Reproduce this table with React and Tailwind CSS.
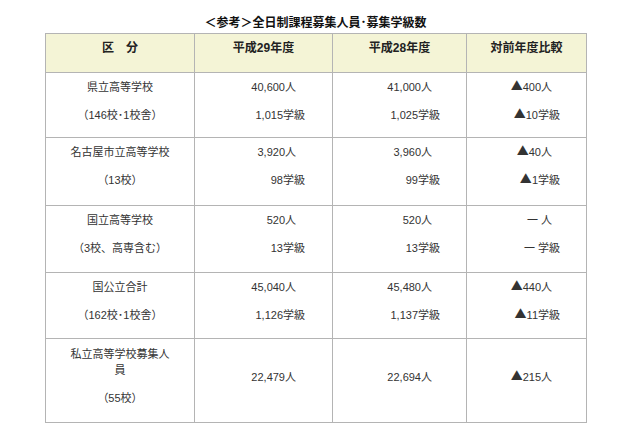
import React from "react";

const font = { fontFamily: '"Liberation Sans", "Noto Sans CJK JP", sans-serif' };
const cjk = { fontFamily: '"Noto Sans CJK JP", sans-serif' };

const rows = [
  {
    name: ["県立高等学校", "（146校･1校舎）"],
    h: "h-[65px]",
    v29: ["40,600人", "1,015学級"],
    v28: ["41,000人", "1,025学級"],
    diff: ["▲400人", "▲10学級"],
  },
  {
    name: ["名古屋市立高等学校", "（13校）"],
    h: "h-[68px]",
    v29: ["3,920人", "98学級"],
    v28: ["3,960人", "99学級"],
    diff: ["▲40人", "▲1学級"],
  },
  {
    name: ["国立高等学校", "（3校、高専含む）"],
    h: "h-[67px]",
    v29: ["520人", "13学級"],
    v28: ["520人", "13学級"],
    diff: ["一 人", "一 学級"],
  },
  {
    name: ["国公立合計", "（162校･1校舎）"],
    h: "h-[66px]",
    v29: ["45,040人", "1,126学級"],
    v28: ["45,480人", "1,137学級"],
    diff: ["▲440人", "▲11学級"],
  },
];

// the triangle is drawn full width in the original, so give it the CJK face
const Val = ({ text }) =>
  text.startsWith("▲") ? (
    <>
      <span style={cjk} className="text-[12px] leading-none">▲</span>
      {text.slice(1)}
    </>
  ) : (
    text
  );

// 人 lines sit a bit further left than 学級 lines in the original
const NumCell = ({ lines, pr1, pr2 }) => (
  <td className="border border-[#b4b4b4] align-top pt-[6px]">
    <div className="flex flex-col gap-[12px]">
      <div className={`text-right h-[16px] leading-[16px] ${pr1}`}>
        <Val text={lines[0]} />
      </div>
      <div className={`text-right h-[16px] leading-[16px] ${pr2}`}>
        <Val text={lines[1]} />
      </div>
    </div>
  </td>
);

export default function App() {
  return (
    <div className="w-[640px] h-[426px] bg-white text-[#333] overflow-hidden" style={font}>
      <div className="pt-[15px] pl-[45px]">
        <div className="w-[541px] text-center text-[12px] leading-[16px] font-bold text-[#111] mb-[2px]">
          ＜参考＞全日制課程募集人員･募集学級数
        </div>
        <table className="border-collapse table-fixed w-[541px] text-[11px]">
          <colgroup>
            <col className="w-[149px]" />
            <col className="w-[138px]" />
            <col className="w-[134px]" />
            <col className="w-[120px]" />
          </colgroup>
          <thead>
            <tr className="h-[39px] bg-[#f4f4d6] text-[12px] font-bold text-[#222]">
              <th className="border border-[#b4b4b4] align-top pt-[6px] leading-[16px]">区　分</th>
              <th className="border border-[#b4b4b4] align-top pt-[6px] leading-[16px]">平成29年度</th>
              <th className="border border-[#b4b4b4] align-top pt-[6px] leading-[16px]">平成28年度</th>
              <th className="border border-[#b4b4b4] align-top pt-[6px] leading-[16px]">対前年度比較</th>
            </tr>
          </thead>
          <tbody>
            {rows.map((r) => (
              <tr key={r.name[0]} className={r.h}>
                <td className="border border-[#b4b4b4] align-top pt-[6px]">
                  <div className="flex flex-col gap-[12px] items-center">
                    <div className="leading-[16px]">{r.name[0]}</div>
                    <div className="leading-[16px]">{r.name[1]}</div>
                  </div>
                </td>
                <NumCell lines={r.v29} pr1="pr-[36px]" pr2="pr-[27px]" />
                <NumCell lines={r.v28} pr1="pr-[34px]" pr2="pr-[26px]" />
                <NumCell lines={r.diff} pr1="pr-[34px]" pr2="pr-[26px]" />
              </tr>
            ))}
            <tr className="h-[84px]">
              <td className="border border-[#b4b4b4] align-top pt-[7px]">
                <div className="flex flex-col items-center">
                  <div className="leading-[16px]">私立高等学校募集人</div>
                  <div className="leading-[16px]">員</div>
                  <div className="leading-[16px] mt-[12px]">（55校）</div>
                </div>
              </td>
              <td className="border border-[#b4b4b4] align-top pt-[30px]">
                <div className="text-right leading-[16px] pr-[36px]">22,479人</div>
              </td>
              <td className="border border-[#b4b4b4] align-top pt-[30px]">
                <div className="text-right leading-[16px] pr-[34px]">22,694人</div>
              </td>
              <td className="border border-[#b4b4b4] align-top pt-[30px]">
                <div className="text-right h-[16px] leading-[16px] pr-[34px]">
                  <Val text="▲215人" />
                </div>
              </td>
            </tr>
          </tbody>
        </table>
      </div>
    </div>
  );
}
